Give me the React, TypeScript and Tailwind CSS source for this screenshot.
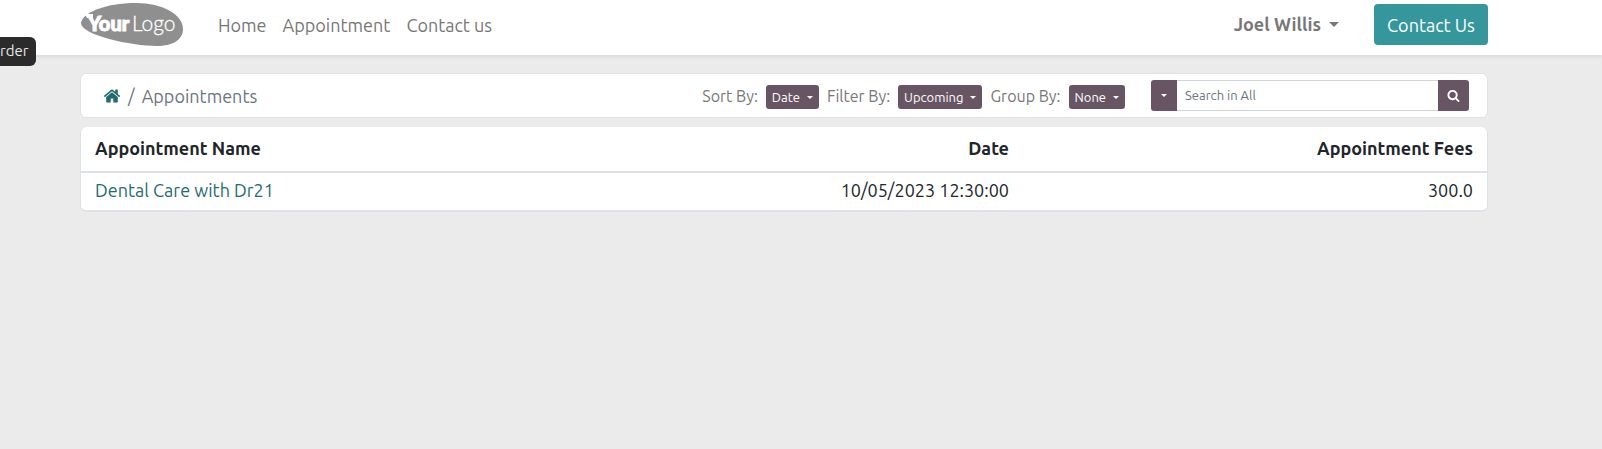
import React from "react";

function Caret({ className = "" }: { className?: string }) {
  return (
    <span
      aria-hidden="true"
      className={`inline-block border-x-transparent border-b-0 border-t-current ${className}`}
    />
  );
}

function HomeIcon() {
  return (
    <svg viewBox="0 0 1792 1792" className="h-[18px] w-[18px]" fill="currentColor" aria-hidden="true">
      <path d="M1472 992v480q0 26-19 45t-45 19h-384v-384h-256v384h-384q-26 0-45-19t-19-45v-480q0-1 .5-3t.5-3l575-474 575 474q1 2 1 6zm223-69l-62 74q-8 9-21 11h-3q-13 0-21-7l-692-577-692 577q-12 8-24 7-13-2-21-11l-62-74q-8-10-7-23.5t11-21.5l719-599q32-26 76-26t76 26l244 204v-195q0-14 9-23t23-9h192q14 0 23 9t9 23v408l219 182q10 8 11 21.5t-7 23.5z" />
    </svg>
  );
}

function SearchIcon() {
  return (
    <svg viewBox="0 0 1792 1792" className="h-[13px] w-[13px]" fill="currentColor" aria-hidden="true">
      <path d="M1216 832q0-185-131.5-316.5t-316.5-131.5-316.5 131.5-131.5 316.5 131.5 316.5 316.5 131.5 316.5-131.5 131.5-316.5zm512 832q0 52-38 90t-90 38q-54 0-90-38l-343-342q-179 124-399 124-143 0-273.5-55.5t-225-150-150-225-55.5-273.5 55.5-273.5 150-225 225-150 273.5-55.5 273.5 55.5 225 150 150 225 55.5 273.5q0 220-124 399l343 343q37 37 37 90z" />
    </svg>
  );
}

function Logo() {
  return (
    <svg viewBox="0 0 102 43" className="h-[43px] w-[102px]" role="img" aria-label="Your Logo">
      <path
        d="M0 20C1 10 24 0 55 0C82 0 102 12 102 26C102 37 91 43 76 43C50 43 0 32 0 20Z"
        fill="#8f8f8f"
      />
      <path d="M4 11H12V15H6Z" fill="#fff" />
      <text
        x="7"
        y="28"
        fill="#fff"
        stroke="#fff"
        strokeWidth="1"
        fontFamily="Lato, sans-serif"
        fontWeight="900"
        fontSize="20"
      >
        Your
      </text>
      <text
        x="51"
        y="28"
        fill="#fff"
        stroke="#fff"
        strokeWidth="0.3"
        fontFamily="Lato, sans-serif"
        fontWeight="300"
        fontSize="21"
      >
        Logo
      </text>
    </svg>
  );
}

const navLinks = ["Home", "Appointment", "Contact us"];

const filters = [
  { id: "sort", label: "Sort By:", value: "Date" },
  { id: "filter", label: "Filter By:", value: "Upcoming" },
  { id: "group", label: "Group By:", value: "None" },
];

function Header() {
  return (
    <header className="relative flex h-[55px] items-start bg-white pt-[3px] pr-[114px] pl-[81px] shadow-[0_2px_4px_rgba(0,0,0,0.08)]">
      <a href="#home" className="shrink-0">
        <Logo />
      </a>
      <nav className="ml-[35px] flex h-[43px] items-center gap-4 pt-px text-[18px] text-[#777]">
        {navLinks.map((link) => (
          <a key={link} href="#nav" className="whitespace-nowrap">
            {link}
          </a>
        ))}
      </nav>
      <div className="ml-auto flex h-[43px] items-center">
        <button type="button" className="flex items-center gap-2 text-[18px] font-bold text-[#777]">
          Joel Willis
          <Caret className="border-x-[5px] border-t-[5px]" />
        </button>
        <a
          href="#contact"
          className="ml-[35px] flex h-[41px] w-[114px] items-center justify-center rounded bg-[#35979c] pt-px text-[18px] whitespace-nowrap text-white"
        >
          Contact Us
        </a>
      </div>
    </header>
  );
}

function Toolbar() {
  return (
    <section className="flex h-[45px] items-center rounded-md border border-[#dee2e6] bg-white pr-[18px] pl-[22px]">
      <nav aria-label="Breadcrumb" className="flex items-center gap-[7px] pt-px text-[18px] text-[#6c757d]">
        <a href="#home" aria-label="Home" className="text-[#1f6b70]">
          <HomeIcon />
        </a>
        <span>/</span>
        <span>Appointments</span>
      </nav>
      <div className="ml-auto flex items-center gap-2">
        {filters.map((f) => (
          <div key={f.id} className="flex items-center gap-2">
            <span id={f.id} className="text-[16px] whitespace-nowrap text-[#777]">
              {f.label}
            </span>
            <button
              type="button"
              aria-describedby={f.id}
              className="mt-[2px] flex h-6 items-center gap-[7px] rounded-[3px] bg-[#685563] px-[6px] pt-[2px] text-[13px] text-white"
            >
              {f.value}
              <Caret className="border-x-[3px] border-t-[3px]" />
            </button>
          </div>
        ))}
      </div>
      <form role="search" className="ml-[26px] flex h-[31px]" onSubmit={(e) => e.preventDefault()}>
        <button
          type="button"
          aria-label="Search scope"
          className="flex w-[26px] items-center justify-center rounded-l-[3px] bg-[#685563] text-white"
        >
          <Caret className="border-x-[3px] border-t-[3px]" />
        </button>
        <input
          type="search"
          aria-label="Search in All"
          placeholder="Search in All"
          className="w-[261px] border-y border-[#ced4da] bg-white px-2 text-[13px] text-[#495057] outline-none placeholder:text-[#6c757d]"
        />
        <button
          type="submit"
          aria-label="Search"
          className="flex w-[31px] items-center justify-center rounded-r-[3px] bg-[#685563] text-white"
        >
          <SearchIcon />
        </button>
      </form>
    </section>
  );
}

function Appointments() {
  return (
    <section className="mt-[9px] overflow-hidden rounded-md border-x border-b-2 border-[#dee2e6] bg-white">
      <table className="w-full table-fixed border-collapse text-[18px] leading-6 text-[#212529]">
        <thead>
          <tr className="h-[45px] border-b-2 border-[#dee2e6] font-bold">
            <th scope="col" className="w-[34%] px-[14px] pb-[2px] text-left">
              Appointment Name
            </th>
            <th scope="col" className="w-[33%] px-[14px] pb-[2px] text-right">
              Date
            </th>
            <th scope="col" className="w-[33%] px-[14px] pb-[2px] text-right">
              Appointment Fees
            </th>
          </tr>
        </thead>
        <tbody>
          <tr className="h-[38px]">
            <td className="px-[14px] pb-[3px]">
              <a href="#appointment" className="text-[#1f6b70]">
                Dental Care with Dr21
              </a>
            </td>
            <td className="px-[14px] pb-[3px] text-right">10/05/2023 12:30:00</td>
            <td className="px-[14px] pb-[3px] text-right">300.0</td>
          </tr>
        </tbody>
      </table>
    </section>
  );
}

export default function App() {
  return (
    <div className="relative min-h-screen bg-[#ebebeb] font-['Ubuntu','Noto_Sans',sans-serif]">
      <Header />
      <main className="pt-[18px] pr-[114px] pl-20">
        <Toolbar />
        <Appointments />
      </main>
      <div className="absolute top-[37px] left-0 flex h-[29px] items-center rounded-r-md bg-[#2b2b2b] pr-2 text-[15px] text-[#e8e8e8]">
        rder
      </div>
    </div>
  );
}
